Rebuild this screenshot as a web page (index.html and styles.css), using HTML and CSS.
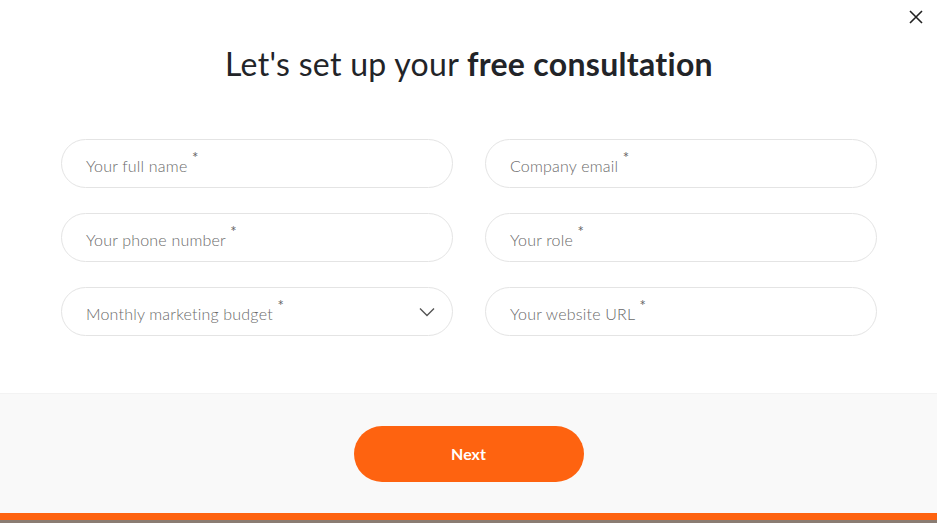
FILE: index.html
```html
<!DOCTYPE html>
<html lang="en">
  <head>
    <meta charset="utf-8" />
    <meta name="viewport" content="width=device-width, initial-scale=1.0" />
    <title>Free consultation</title>
    <link rel="stylesheet" href="styles.css">
  </head>
  <body>
    <div class="modal">
      <button class="close" aria-label="Close">
        <svg width="14" height="14" viewBox="0 0 14 14">
          <path d="M1 1L13 13M13 1L1 13" stroke="#222" stroke-width="1.6" fill="none" />
        </svg>
      </button>

      <section class="content">
        <h1>Let's set up your <strong>free consultation</strong></h1>

        <form class="fields">
          <div class="field"><span>Your full name <sup>*</sup></span></div>
          <div class="field"><span>Company email <sup>*</sup></span></div>
          <div class="field"><span>Your phone number <sup>*</sup></span></div>
          <div class="field"><span>Your role <sup>*</sup></span></div>
          <div class="field select">
            <span>Monthly marketing budget <sup>*</sup></span>
            <svg width="16" height="10" viewBox="0 0 16 10">
              <path d="M1 1.5L8 8.5L15 1.5" stroke="#555" stroke-width="1.4" fill="none" />
            </svg>
          </div>
          <div class="field"><span>Your website URL <sup>*</sup></span></div>
        </form>
      </section>

      <footer class="actions">
        <button class="next">Next</button>
      </footer>
      <div class="bar"></div>
    </div>
  </body>
</html>
```

FILE: styles.css
```css
* {
  box-sizing: border-box;
}

body {
  margin: 0;
  font-family: "Lato", "Noto Sans", sans-serif;
  background: #8a7c73;
  color: #222428;
}

.modal {
  position: relative;
  background: #fff;
  height: 520px;
  display: flex;
  flex-direction: column;
}

.close {
  position: absolute;
  top: 10px;
  right: 14px;
  border: none;
  background: none;
  padding: 0;
  width: 14px;
  height: 14px;
}

.content {
  padding: 44px 60px 0 61px;
  height: 393px;
}

h1 {
  margin: 0;
  text-align: center;
  font-size: 32px;
  font-weight: 400;
  letter-spacing: 0.3px;
  line-height: 40px;
}

h1 strong {
  font-weight: 700;
}

.fields {
  margin-top: 55px;
  display: grid;
  grid-template-columns: 392px 392px;
  column-gap: 32px;
  row-gap: 25px;
}

.field {
  height: 49px;
  border: 1px solid #e4e4e4;
  border-radius: 25px;
  padding: 0 24px;
  display: flex;
  align-items: center;
  font-size: 16px;
  font-weight: 300;
  letter-spacing: 0.2px;
  color: #6a6a6a;
}

.field sup {
  font-size: 15px;
  font-weight: 400;
  color: #666;
  position: relative;
  top: -3px;
}

.select {
  justify-content: space-between;
  padding-right: 17px;
}

.actions {
  background: #f9f9f9;
  height: 120px;
  display: flex;
  justify-content: center;
  align-items: center;
  border-top: 1px solid #f3f3f3;
}

.next {
  width: 230px;
  height: 56px;
  border: none;
  border-radius: 28px;
  background: #fe6310;
  color: #fff;
  font-family: inherit;
  font-size: 16px;
  font-weight: 700;
}

.bar {
  height: 7px;
  background: #fe6310;
}
```
